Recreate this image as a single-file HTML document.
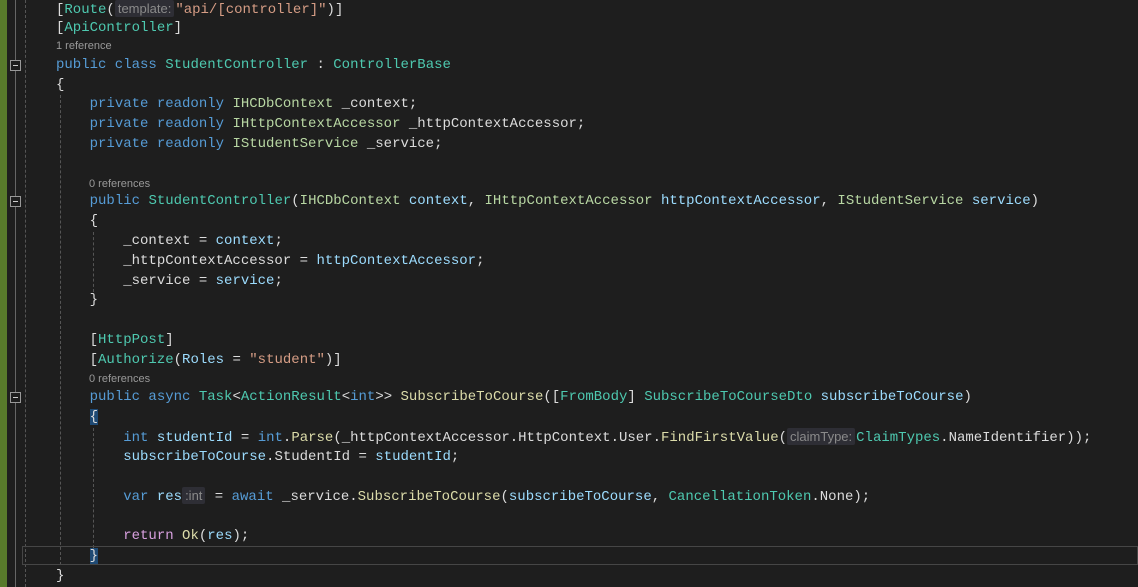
<!DOCTYPE html>
<html><head><meta charset="utf-8"><style>
html,body{margin:0;padding:0;background:#1e1e1e;width:1138px;height:587px;overflow:hidden;position:relative}
.l{position:absolute;left:56px;height:20px;line-height:20px;font-family:"Liberation Mono",monospace;font-size:14px;color:#dcdcdc;white-space:pre}
.lens{position:absolute;font-family:"Liberation Sans",sans-serif;font-size:11px;color:#999;line-height:14px}
.k{color:#569cd6}.t{color:#4ec9b0}.i{color:#b8d7a3}.s{color:#d69d85}.m{color:#dcdcaa}.v{color:#9cdcfe}.c{color:#d8a0df}
.h{font-family:"Liberation Sans",sans-serif;font-size:13px;color:#8a8a8a;background:#2e2e35;padding:1px 3px;border-radius:2px;margin-right:1px}
.g{position:absolute;top:0;width:0;border-left:1px dashed #555}
.box{position:absolute;left:10px;width:9px;height:9px;border:1px solid #999;background:#1e1e1e}
.box:after{content:"";position:absolute;left:2px;top:4px;width:5px;height:1px;background:#ccc}
.br{background:#1f4a74}
</style></head><body>
<div style="position:absolute;left:0;top:0;width:7px;height:587px;background:#587a2b"></div>
<div style="position:absolute;left:15px;top:0;width:1px;height:587px;background:#666"></div>
<div class="g" style="left:25px;height:587px"></div>
<div class="g" style="left:60px;top:95px;height:470px"></div>
<div class="g" style="left:93px;top:232px;height:60px"></div>
<div class="g" style="left:93px;top:428px;height:120px"></div>
<div style="position:absolute;left:22px;top:546px;width:1116px;height:19px;border:1px solid #464646;box-sizing:border-box"></div>
<div class="box" style="top:60px"></div>
<div class="box" style="top:196px"></div>
<div class="box" style="top:392px"></div>

<div class="l" style="top:-1px">[<span class="t">Route</span>(<span class="h">template:</span><span class="s">"api/[controller]"</span>)]</div>
<div class="l" style="top:18px">[<span class="t">ApiController</span>]</div>
<div class="lens" style="left:56px;top:39px">1 reference</div>
<div class="l" style="top:55px"><span class="k">public class</span> <span class="t">StudentController</span> : <span class="t">ControllerBase</span></div>
<div class="l" style="top:75px">{</div>
<div class="l" style="top:94px">    <span class="k">private readonly</span> <span class="i">IHCDbContext</span> _context;</div>
<div class="l" style="top:114px">    <span class="k">private readonly</span> <span class="i">IHttpContextAccessor</span> _httpContextAccessor;</div>
<div class="l" style="top:134px">    <span class="k">private readonly</span> <span class="i">IStudentService</span> _service;</div>
<div class="lens" style="left:89px;top:177px">0 references</div>
<div class="l" style="top:191px">    <span class="k">public</span> <span class="t">StudentController</span>(<span class="i">IHCDbContext</span> <span class="v">context</span>, <span class="i">IHttpContextAccessor</span> <span class="v">httpContextAccessor</span>, <span class="i">IStudentService</span> <span class="v">service</span>)</div>
<div class="l" style="top:211px">    {</div>
<div class="l" style="top:231px">        _context = <span class="v">context</span>;</div>
<div class="l" style="top:251px">        _httpContextAccessor = <span class="v">httpContextAccessor</span>;</div>
<div class="l" style="top:271px">        _service = <span class="v">service</span>;</div>
<div class="l" style="top:290px">    }</div>
<div class="l" style="top:330px">    [<span class="t">HttpPost</span>]</div>
<div class="l" style="top:350px">    [<span class="t">Authorize</span>(<span class="v">Roles</span> = <span class="s">"student"</span>)]</div>
<div class="lens" style="left:89px;top:372px">0 references</div>
<div class="l" style="top:387px">    <span class="k">public async</span> <span class="t">Task</span>&lt;<span class="t">ActionResult</span>&lt;<span class="k">int</span>&gt;&gt; <span class="m">SubscribeToCourse</span>([<span class="t">FromBody</span>] <span class="t">SubscribeToCourseDto</span> <span class="v">subscribeToCourse</span>)</div>
<div class="l" style="top:407px">    <span class="br">{</span></div>
<div class="l" style="top:427px">        <span class="k">int</span> <span class="v">studentId</span> = <span class="k">int</span>.<span class="m">Parse</span>(_httpContextAccessor.HttpContext.User.<span class="m">FindFirstValue</span>(<span class="h">claimType:</span><span class="t">ClaimTypes</span>.NameIdentifier));</div>
<div class="l" style="top:447px">        <span class="v">subscribeToCourse</span>.StudentId = <span class="v">studentId</span>;</div>
<div class="l" style="top:486px">        <span class="k">var</span> <span class="v">res</span><span class="h">:int</span> = <span class="k">await</span> _service.<span class="m">SubscribeToCourse</span>(<span class="v">subscribeToCourse</span>, <span class="t">CancellationToken</span>.None);</div>
<div class="l" style="top:526px">        <span class="c">return</span> <span class="m">Ok</span>(<span class="v">res</span>);</div>
<div class="l" style="top:546px">    <span class="br">}</span></div>
<div class="l" style="top:566px">}</div>
</body></html>
